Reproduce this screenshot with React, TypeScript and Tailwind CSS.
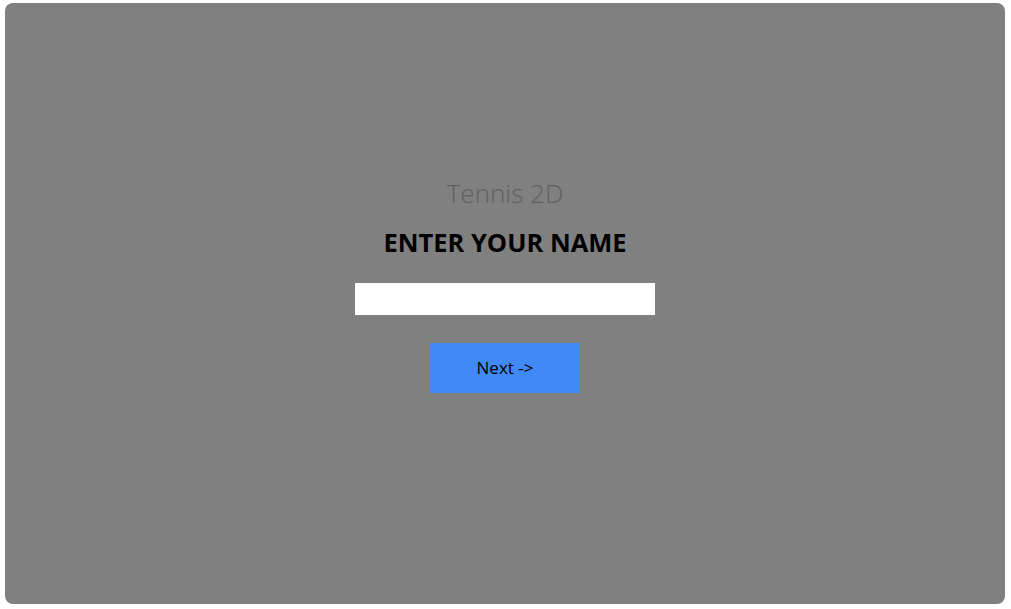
import React, { useState } from 'react'

const App = () => {
  const [name, setName] = useState('')

  return (
    <div className="w-[1011px] h-[609px] bg-white pt-[3px] pl-[5px]">
      <div
        className="w-[1000px] h-[601px] rounded-lg bg-[#808080] flex flex-col items-center pt-[170px]"
        style={{ fontFamily: '"Open Sans", "Noto Sans", sans-serif' }}
      >
        <h2 className="text-[26px] leading-[40px] font-light text-[#616161]">Tennis 2D</h2>

        <h1 className="mt-[9px] text-[25.5px] leading-[40px] font-bold text-black">ENTER YOUR NAME</h1>

        <input
          type="text"
          value={name}
          onChange={(e) => setName(e.target.value)}
          className="mt-[21px] w-[300px] h-[32px] bg-white outline-none px-2 text-base"
        />

        <button className="mt-[28px] w-[150px] h-[50px] bg-[#4189f5] text-black text-[17px]">
          Next -&gt;
        </button>
      </div>
    </div>
  )
}

export default App
